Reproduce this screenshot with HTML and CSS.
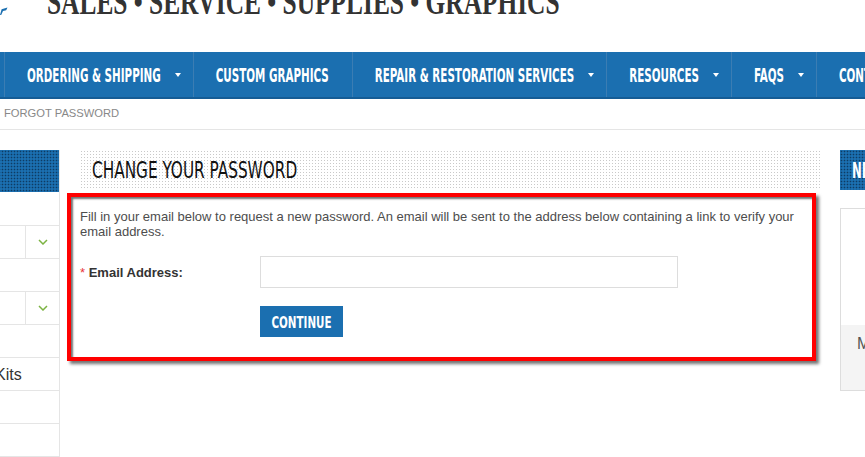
FILE: index.html
```html
<!DOCTYPE html>
<html>
<head>
    <meta charset="UTF-8">
    <title>Forgot Password</title>
    <link rel="stylesheet" href="styles.css">
</head>
<body>
    <div class="page">
        <header class="top">
            <svg class="logo-mark" width="8" height="16" viewBox="0 0 8 16">
                <path d="M0 15 L1.6 9.2 L7.5 7.6 L6.2 10.2 L3 11 L1.2 15 Z" fill="#1b6fb0"/>
            </svg>
            <div class="tagline">SALES • SERVICE • SUPPLIES • GRAPHICS</div>
        </header>

        <nav class="mainnav">
            <ul>
                <li class="drop"><span class="nav-label">ORDERING &amp; SHIPPING</span><i class="caret"></i></li>
                <li><span class="nav-label">CUSTOM GRAPHICS</span></li>
                <li class="drop"><span class="nav-label">REPAIR &amp; RESTORATION SERVICES</span><i class="caret"></i></li>
                <li class="drop"><span class="nav-label">RESOURCES</span><i class="caret"></i></li>
                <li class="drop"><span class="nav-label">FAQS</span><i class="caret"></i></li>
                <li><span class="nav-label">CONTACT US</span></li>
            </ul>
        </nav>

        <div class="crumbs">FORGOT PASSWORD</div>

        <div class="layout">
            <aside class="sidebar">
                <div class="block-head dots-blue"><span class="head-label">CATEGORIES</span></div>
                <ul class="cat-list">
                    <li><span class="cat-name">Decals</span></li>
                    <li><span class="cat-name">Emblems</span><span class="toggle"><svg width="10" height="6" viewBox="0 0 10 6"><polyline points="1,1 5,5 9,1" fill="none" stroke="#7cb342" stroke-width="1.5"/></svg></span></li>
                    <li><span class="cat-name">Parts</span></li>
                    <li><span class="cat-name">Supplies</span><span class="toggle"><svg width="10" height="6" viewBox="0 0 10 6"><polyline points="1,1 5,5 9,1" fill="none" stroke="#7cb342" stroke-width="1.5"/></svg></span></li>
                    <li><span class="cat-name">Tools</span></li>
                    <li><span class="cat-name">Reproduction Decal Kits</span></li>
                    <li><span class="cat-name">Manuals</span></li>
                    <li><span class="cat-name">Gift Cards</span></li>
                </ul>
            </aside>

            <main class="content">
                <div class="page-title dots-grey">
                    <h1>CHANGE YOUR PASSWORD</h1>
                </div>

                <div class="notice-box">
                    <p class="intro">Fill in your email below to request a new password. An email will be sent to the address below containing a link to verify your email address.</p>
                    <div class="form-row">
                        <label for="email"><span class="req">*</span> Email Address:</label>
                        <input type="text" id="email">
                    </div>
                    <div class="button-row">
                        <button class="btn-continue"><span class="btn-label">CONTINUE</span></button>
                    </div>
                </div>
            </main>

            <aside class="rightcol">
                <div class="block-head dots-blue right-head"><span class="head-label">NEWSLETTER</span></div>
                <div class="promo-box">
                    <div class="promo-body"></div>
                    <div class="promo-foot">Manage subscription</div>
                </div>
            </aside>
        </div>
    </div>
</body>
</html>
```

FILE: styles.css
```css
html, body {
    margin: 0;
    padding: 0;
    overflow: hidden;
}
body {
    font-family: Arial, "Liberation Sans", sans-serif;
    color: #444;
    background: #fff;
}
.page {
    width: 1100px;
}

/* header */
.top {
    height: 52px;
    display: flex;
    align-items: flex-start;
    overflow: hidden;
}
.logo-mark {
    flex: none;
}
.tagline {
    margin: -5px 0 0 39px;
    font: bold 25.4px/25px "Liberation Serif", "Times New Roman", serif;
    color: #333;
    white-space: nowrap;
    transform: scaleY(1.4);
    transform-origin: 0 100%;
}

/* main menu */
.mainnav {
    height: 45px;
    background: #1b6fb0;
    border-bottom: 2px solid #155c95;
}
.mainnav ul {
    list-style: none;
    margin: 0 0 0 4px;
    padding: 0;
    display: flex;
    height: 100%;
}
.mainnav li {
    display: flex;
    align-items: center;
    padding: 0 23px 0 22px;
    border-left: 1px solid #3b7db3;
    color: #fff;
    font: bold 11.5px "DejaVu Sans Condensed", "Liberation Sans Narrow", sans-serif;
    white-space: nowrap;
}
.mainnav li.drop {
    padding-right: 12px;
}
.nav-label {
    display: inline-block;
    transform: scaleY(1.68);
}
.caret {
    width: 0;
    height: 0;
    margin-left: 14px;
    border-top: 4px solid #fff;
    border-left: 3.5px solid transparent;
    border-right: 3.5px solid transparent;
}

.crumbs {
    box-sizing: border-box;
    height: 31px;
    padding: 8px 0 0 4px;
    border-bottom: 1px solid #e5e5e5;
    font-size: 11.2px;
    line-height: 13px;
    color: #888;
}

/* columns */
.layout {
    display: flex;
    align-items: flex-start;
    margin-top: 20px;
}
.dots-blue {
    background-color: #1b6fb0;
    background-image: radial-gradient(circle, #0e3c63 0.7px, transparent 1.1px);
    background-size: 3px 3px;
}
.dots-grey {
    background-color: #fff;
    background-image: radial-gradient(circle, #c9c9c9 0.6px, transparent 1px);
    background-size: 3px 3px;
}
.block-head {
    display: flex;
    align-items: center;
    padding-left: 12px;
    color: #fff;
    font: bold 13px "DejaVu Sans Condensed", "Liberation Sans Narrow", sans-serif;
}
.head-label {
    display: inline-block;
    transform: scaleY(1.68);
}

.sidebar {
    flex: none;
    box-sizing: border-box;
    width: 221px;
    margin-left: -161px;
    border-right: 1px solid #e5e5e5;
}
.sidebar .block-head {
    height: 42px;
}
.cat-list {
    list-style: none;
    margin: 0;
    padding: 1px 0 0;
}
.cat-list li {
    display: flex;
    height: 32px;
    border-bottom: 1px solid #e5e5e5;
}
.cat-name {
    flex: 1;
    padding-left: 11px;
    font-size: 16px;
    line-height: 33px;
    color: #333;
    white-space: nowrap;
}
.toggle {
    width: 33px;
    border-left: 1px solid #e5e5e5;
    display: flex;
    align-items: center;
    justify-content: center;
}

.content {
    flex: none;
    width: 740px;
    margin-left: 20px;
}
.page-title {
    height: 40px;
    display: flex;
    align-items: center;
    padding-left: 12px;
}
.page-title h1 {
    margin: 0;
    font: normal 17px "DejaVu Sans Condensed", "Liberation Sans Narrow", sans-serif;
    color: #111;
    transform: scaleY(1.4);
}

.notice-box {
    margin: 3px 4px 0 -13px;
    padding: 12px 9px 20px;
    border: 4px solid #f00;
    box-shadow: 3px 3px 3px rgba(0,0,0,0.55), inset 2px 2px 2px rgba(0,0,0,0.55);
}
.intro {
    margin: 0;
    font-size: 13px;
    line-height: 15px;
    color: #4d4d4d;
}
.form-row {
    display: flex;
    align-items: center;
    margin-top: 17px;
}
.form-row label {
    width: 180px;
    font-size: 13px;
    font-weight: bold;
    color: #333;
}
.req {
    color: #e8343a;
    font-weight: normal;
}
.form-row input {
    box-sizing: border-box;
    width: 418px;
    height: 32px;
    border: 1px solid #ddd;
    padding: 4px 8px;
}
.button-row {
    margin-top: 18px;
    padding-left: 180px;
}
.btn-continue {
    width: 83px;
    height: 31px;
    border: none;
    padding: 0;
    background: #1b6fb0;
    color: #fff;
    font: bold 11.5px "DejaVu Sans Condensed", "Liberation Sans Narrow", sans-serif;
}
.btn-label {
    display: inline-block;
    transform: scaleY(1.45);
}

.rightcol {
    flex: none;
    width: 220px;
    margin-left: 20px;
}
.right-head {
    height: 40px;
}
.promo-box {
    margin-top: 18px;
    border: 1px solid #ddd;
}
.promo-body {
    height: 116px;
}
.promo-foot {
    height: 65px;
    background: #f4f4f4;
    padding-left: 16px;
    font-size: 16px;
    line-height: 38px;
    color: #555;
}
```
